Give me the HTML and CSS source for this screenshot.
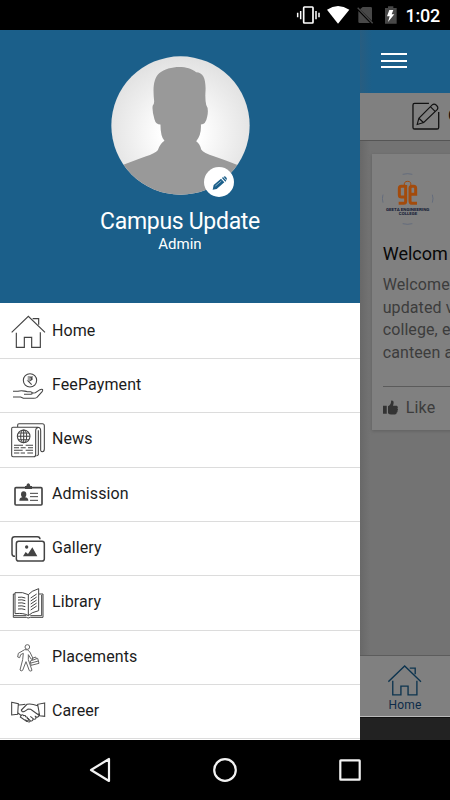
FILE: index.html
```html
<!DOCTYPE html>
<html lang="en">
<head>
<meta charset="utf-8">
<title>Campus Update</title>
<link rel="stylesheet" href="styles.css">
</head>
<body>
<header class="status">
  <svg class="status-icons" viewBox="0 0 360 90">
    <g fill="none" stroke="#fff" stroke-width="5"><rect x="71" y="21" width="28" height="48" rx="2"/><path d="M62 33v25M108 33v25M53 38v14M117 38v14" stroke-width="4.5"/></g>
    <path d="M141 29Q174 7 208 29L174 71z" fill="#fff"/>
    <g fill="#484848"><path d="M248 21h24q4 0 4 4v38L240 28zM235 33l35 36h-31q-4 0-4-4z"/><path d="M233 23l45 47" stroke="#484848" stroke-width="4"/></g>
    <path d="M315 24h9v-5h16v5h10v47h-35z" fill="#484848"/><path d="M328 30h12l-5 13h8L324 66l5-17h-8z" fill="#fff"/>
  </svg>
  <span class="clock">1:02</span>
</header>
<main class="screen">
  <aside class="drawer">
    <section class="profile">
      <div class="avatar">
        <svg class="portrait" viewBox="62 50 416 416">
          <defs>
            <radialGradient id="back" gradientUnits="userSpaceOnUse" cx="270" cy="280" r="235"><stop offset=".25" stop-color="#fff"/><stop offset=".65" stop-color="#eee"/><stop offset="1" stop-color="#e0e0e0"/></radialGradient>
            <clipPath id="round"><circle cx="270" cy="258" r="207"/></clipPath>
            <filter id="soft"><feGaussianBlur stdDeviation="1.5"/></filter>
          </defs>
          <g clip-path="url(#round)">
            <rect x="60" y="48" width="420" height="420" fill="url(#back)"/>
            <path filter="url(#soft)" fill="#999" d="M50 395Q118 368 165 351Q195 341 202 332Q210 311 222 304Q210 291 210 255Q196 255 192 239Q184 211 187 198Q192 192 191 184C187 145 189 117 207 101C233 80 290 75 317 99C338 100 346 119 345 152Q343 180 347 197Q355 208 350 231Q346 255 331 255Q333 286 317 305Q328 312 332 330Q338 341 372 351Q425 369 490 397V480H50z"/>
          </g>
        </svg>
        <span class="edit"><svg viewBox="0 0 90 90" width="30" height="30"><path fill="#1b5f8a" d="M26 68l3-14 22-19 10 11-23 20zM54 33l3-3 10 11-3 3zM59 29q3-3 6 0l3 4q2 3-1 6z"/><path d="M34 57l18-15" stroke="#fff" stroke-width="1.5"/></svg></span>
      </div>
      <h1>Campus Update</h1>
      <p>Admin</p>
    </section>
    <nav class="menu">
      <a class="item"><svg viewBox="0 15 156 162"><path d="M35 97L85 49l50 48M49 98v44h24v-30h22v30h26V97M98 56h18v18"/></svg><span>Home</span></a>
      <a class="item"><svg viewBox="0 177 156 162"><g stroke-width="3.2"><circle cx="90" cy="241" r="20"/><path d="M83 231h16M83 237h16M84 231c15-2 15 13 0 12l11 11M39 274h15c12-5 18 0 28 1h10c7 1 6 8 0 8H72M94 280l12-2 14-9c7-3 10 0 7 5l-16 18q-4 3-10 3H70l-8-4H39"/></g></svg><span>FeePayment</span></a>
      <a class="item"><svg viewBox="0 9 156 162"><g stroke-width="3.2"><path d="M53 51v-6q0-4 4-4h70q6 0 6 6v70q0 8-6 8t-5-8V62q0-10-9-10H39q-4 0-4 4v80q0 4 4 4h62q6 0 6-6V62q0-9 7-9M115 61v75M109 137q5 1 6-5"/><circle cx="71" cy="79" r="19"/><ellipse cx="71" cy="79" rx="9" ry="19"/><path d="M52 79h38M71 60v38M55 69h32M55 89h32M42 106h27M77 106h22M42 113h15M62 113h15M84 113h15M42 121h26M77 121h22M42 129h16M62 129h13M82 129h17"/></g></svg><span>News</span></a>
      <a class="item"><svg viewBox="0 172 156 162"><rect x="45" y="231" width="81" height="52" rx="3" stroke-width="5"/><path class="fill" d="M75 226h4q1-8 6-8t6 8h5v9H75zM63 252q0-10 8-10t8 10q0 5-4 8 10 1 10 10H58q0-9 9-10-4-3-4-8z"/><path d="M90 248h24M90 258h24M90 269h24" stroke-width="3"/></svg><span>Admission</span></a>
      <a class="item"><svg viewBox="0 6 156 162"><path d="M45 109q-9 0-9-8V58q0-8 8-8h68q8 0 8 8" stroke-width="4.5"/><rect x="49" y="64" width="84" height="59" rx="7" stroke-width="4.5"/><circle class="fill" cx="80" cy="81" r="5"/><path class="fill" d="M69 109l8-13 7 6 13-20 15 27z"/></svg><span>Gallery</span></a>
      <a class="item"><svg viewBox="0 169 156 162"><g stroke-width="3"><path d="M45 219q25-3 40 6 8-11 31-18v66q-23 5-31 15-13-9-40-6zM85 225v63M45 223h-5v70h39q5 4 12 0h38v-70h-12M42 288h37M91 288h34v-62"/><path d="M54 233q12-2 22 2M54 241q12-2 22 2M54 250q12-2 22 2M54 259q12-2 22 2M54 268q12-2 22 2M92 235l18-12M92 244l18-12M92 253l18-12M92 262l18-12M92 271l18-12"/></g></svg><span>Library</span></a>
      <a class="item"><svg viewBox="0 2 156 162"><g stroke-width="3" stroke="#666"><circle cx="82" cy="50" r="7"/><path d="M74 58L55 69l-2 11 6 2 3-9 8-4-2 19-8 31q3 5 8 1l10-26 10 27q5 3 8-1L85 88V73l9 14 5-3-10-20q-6-8-15-6zM91 92l22-8 4 15-24 6zM98 89l-1-5 10-4 2 5M93 98l22-6"/></g></svg><span>Placements</span></a>
      <a class="item"><svg viewBox="0 165 156 162"><g stroke-width="3.2"><path d="M35 217l20 4-2 32-18 2zM134 219l-21 4 6 34 15 2zM55 225q12 0 21-2M113 227q-20-7-32-4l-17 17q2 8 10 4l10-7 8 1 25 18q-2 8-10 4M54 249l10 8M105 257q7 11-3 11l-11-9M99 266q0 9-8 6l-9-8M91 272q-2 7-9 2l-6-5M119 249l-6 5"/><path d="M63 257q4-5 8 0 5-2 6 3 6 0 5 5 6 1 2 7l-4 2-19-13z"/></g></svg><span>Career</span></a>
    </nav>
  </aside>
  <section class="feed">
    <div class="topbar"><i></i><i></i><i></i></div>
    <div class="compose"><svg width="28" height="28" viewBox="188 35 84 86"><g fill="none" stroke="#111" stroke-width="4"><path d="M239 39h-44q-5 0-5 5v69q0 5 5 5h69q5 0 5-5V66"/><path stroke-width="3.5" d="M203 104l5-19 41-41q6-5 13 1t3 13l-42 40zM208 85l14 13M244 50l14 14"/></g></svg><b>C</b></div>
    <div class="content">
      <article class="card">
        <svg class="crest" width="52" height="52" viewBox="96 248 156 156"><g fill="none" stroke="#56627a" stroke-width="2"><path d="M158 252q15-4 29 0M158 400q15 4 29 0M99 337q-4-12 0-24M247 337q4-12 0-24"/></g><g fill="none" stroke="#a34b0c" stroke-width="9"><path d="M167 288h-13q-6 0-6 6v20q0 6 6 6h13M167 284v49q0 6-6 6h-15M180 312h17v-18q0-6-6-6h-5q-6 0-6 6v37q0 8 7 8h14"/><path d="M163 286q-2-13 10-13t9 13" stroke-width="3"/></g><g fill="#111832" font-family="Roboto" font-weight="700" font-size="12" text-anchor="middle"><text x="173" y="361" textLength="130" lengthAdjust="spacingAndGlyphs">GEETA ENGINEERING</text><text x="174" y="375" textLength="55" lengthAdjust="spacingAndGlyphs">COLLEGE</text></g></svg>
        <h2>Welcom</h2>
        <p>Welcome<br>updated v<br>college, e<br>canteen a</p>
        <div class="like"><svg width="15" height="15" viewBox="0 0 24 24"><path fill="#333" d="M0 9h6v13H0zM8 21V10c4-2 5-5 5-9 4-1 5 3 3 8h6q3 2 1 4 2 2 0 4 1 2-1 3 0 3-3 3h-6q-3 0-5-2z"/></svg><span>Like</span></div>
      </article>
    </div>
    <div class="tab"><svg width="34" height="32" viewBox="116 73 100 94"><path fill="none" stroke="#0d344f" stroke-width="4" d="M117 122l48-46 48 46M130 119v42h24v-26h21v26h26v-42M180 82h16v18"/></svg><span>Home</span></div>
    <div class="strip"></div>
  </section>
</main>
<footer class="navbar">
  <svg viewBox="0 0 450 60" width="450" height="60"><g fill="none" stroke="#f2f2f2" stroke-width="2.2" stroke-linejoin="round"><path d="M91 30l18-11v22z"/><circle cx="225" cy="30" r="10.8"/><rect x="340.3" y="20.3" width="19.4" height="19.4" rx=".5"/></g></svg>
</footer>
</body>
</html>
```
FILE: styles.css
```css
* { box-sizing: border-box; }
body { margin: 0; width: 450px; height: 800px; overflow: hidden; background: #000; font-family: Roboto, sans-serif; display: flex; flex-direction: column; }
h1, h2, p { margin: 0; font-weight: 400; }
svg { display: block; flex: none; }
.status { height: 30px; display: flex; padding-left: 280px; color: #fff; }
.status-icons { width: 120px; height: 30px; }
.clock { margin-left: 5.5px; font-size: 18px; font-weight: 500; line-height: 32px; letter-spacing: -.2px; }
.screen { height: 710px; display: grid; grid-template-columns: 360px 90px; overflow: hidden; }
.drawer { background: #fff; height: 710px; overflow: hidden; }
.profile { height: 273px; background: #1b5f8a; color: #fff; display: flex; flex-direction: column; align-items: center; padding-top: 26px; }
.avatar { position: relative; width: 139px; height: 139px; }
.portrait { width: 139px; height: 139px; }
.edit { position: absolute; left: 93px; top: 111px; width: 30px; height: 30px; border-radius: 50%; background: #fff; }
.profile h1 { font-size: 23px; line-height: 28px; margin-top: 13px; letter-spacing: -.3px; white-space: nowrap; }
.profile p { font-size: 15px; line-height: 20px; margin-top: -2px; }
.menu { padding-top: 1.7px; }
.item { height: 54.35px; display: flex; color: #1c1c1c; font-size: 16px; letter-spacing: .1px; border-bottom: 1px solid #dcdcdc; }
.item svg { width: 52px; height: 54px; fill: none; stroke: #444; stroke-width: 3.5; }
.item .fill { fill: #444; stroke: none; }
.item span { line-height: 51px; }
.feed { width: 90px; height: 710px; overflow: hidden; display: flex; flex-direction: column; background: #737373; }
.topbar { height: 62.5px; background: linear-gradient(90deg, #285d80, #1b5f8a 12px); padding: 23.3px 0 0 21px; display: flex; flex-direction: column; gap: 4.3px; }
.topbar i { width: 26px; height: 2.2px; background: #fff; flex: none; }
.compose { height: 48.5px; background: #808080; border-bottom: 1px solid #555; display: flex; gap: 8px; padding: 9.5px 0 0 52.3px; color: #111; }
.compose b { font-size: 17px; line-height: 26px; }
.content { height: 514px; padding: 13px 0 0 12px; background: linear-gradient(90deg, #686868, #737373 10px); }
.card { width: 200px; height: 276px; background: #808080; padding: 19px 0 0 10.7px; box-shadow: 0 1px 3px #606060; white-space: nowrap; }
.crest { margin-left: -1px; }
.card h2 { font-size: 18px; line-height: 24px; margin-top: 17px; color: #080808; letter-spacing: 0; }
.card p { font-size: 16px; line-height: 22.5px; margin-top: 8px; color: #3c3c3c; letter-spacing: .1px; }
.like { display: flex; align-items: center; gap: 8px; height: 42px; margin-top: 22px; border-top: 1px solid #5b5b5b; font-size: 16px; color: #3c3c3c; letter-spacing: .2px; }
.tab { height: 62px; background: #808080; border-top: 1px solid #5c5c5c; border-bottom: 1px solid #bbb; display: flex; flex-direction: column; align-items: center; padding-top: 9px; color: #0d2b49; font-size: 12px; line-height: 14px; letter-spacing: .2px; }
.tab span { margin-top: 1px; }
.strip { flex: 1; background: #222; border-top: 1px solid #111; }
.navbar { height: 60px; background: #000; }
```
